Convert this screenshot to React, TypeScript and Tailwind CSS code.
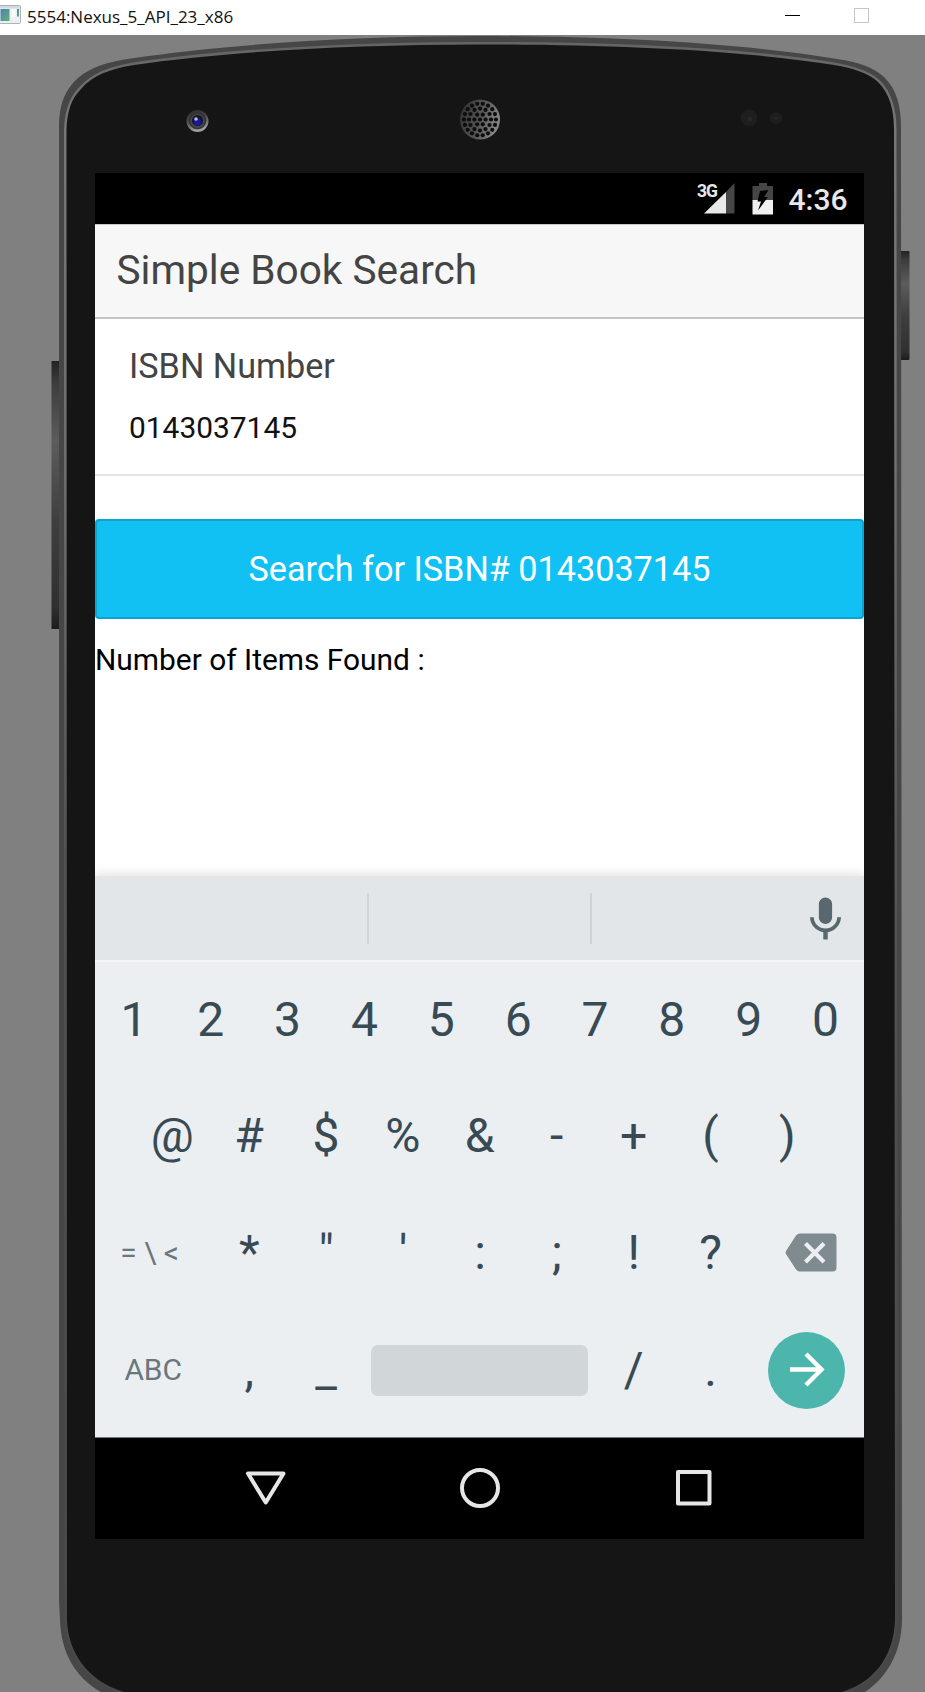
import React from 'react';

const BODY =
  'M59 1600 L59 128 C59 104 65 90 78 78 C92 66 109 62 131 58.500 C220 45 350 36 480 36 C610 36 740 43 837 59 C859 62 873 67 884 77 C897 90 901 106 901 128 L902 1620 C901.500 1650 889 1676 865 1692 L101 1692 C73 1676 61 1650 60 1620 Z';
const FACE =
  'M67 1600 L66.500 130 C67 112 71 99 81 89 C93 75 110 69 134 65 C220 52 350 44.500 480 44.500 C610 44.500 740 50 834 65 C854 68.500 868 73 878 82 C890 94 894 110 894 130 L895 1620 C894 1650 880 1680 842 1692 L124 1692 C85 1680 68 1650 67 1620 Z';

function speakerHoles() {
  const holes: { x: number; y: number }[] = [];
  [0, 5.6, 11, 16].forEach((radius, ring) => {
    const count = ring === 0 ? 1 : ring * 6;
    for (let i = 0; i < count; i++) {
      const a = (i / count) * Math.PI * 2;
      holes.push({ x: 480 + radius * Math.cos(a), y: 119.5 + radius * Math.sin(a) });
    }
  });
  return holes;
}

function DeviceArt() {
  return (
    <svg className="absolute left-0 top-0" width="925" height="1657" viewBox="0 35 925 1657" aria-hidden="true">
      <defs>
        <linearGradient id="key" x1="0" y1="0" x2="0" y2="1">
          <stop offset="0" stopColor="#222" />
          <stop offset="0.08" stopColor="#3c3c3c" />
          <stop offset="0.3" stopColor="#5c5c5c" />
          <stop offset="0.6" stopColor="#3e3e3e" />
          <stop offset="0.92" stopColor="#303030" />
          <stop offset="1" stopColor="#1c1c1c" />
        </linearGradient>
        <linearGradient id="edge" x1="0" y1="0" x2="0" y2="1">
          <stop offset="0" stopColor="#646465" />
          <stop offset="0.05" stopColor="#77777a" />
          <stop offset="0.25" stopColor="#707073" />
          <stop offset="0.5" stopColor="#545456" />
          <stop offset="1" stopColor="#48484a" />
        </linearGradient>
        <linearGradient id="camera" x1="0" y1="0" x2="0.3" y2="1">
          <stop offset="0" stopColor="#262626" />
          <stop offset="0.5" stopColor="#4c4c4c" />
          <stop offset="1" stopColor="#a0a0a0" />
        </linearGradient>
        <linearGradient id="mesh" x1="0" y1="0" x2="1" y2="0.3">
          <stop offset="0" stopColor="#2c2c2c" />
          <stop offset="0.6" stopColor="#565656" />
          <stop offset="1" stopColor="#858585" />
        </linearGradient>
      </defs>
      <rect x="51.500" y="361" width="9" height="268" fill="url(#key)" />
      <rect x="900" y="251" width="9.500" height="109" rx="1" fill="url(#key)" />
      <path d={BODY} fill="#464647" />
      <path d={FACE} fill="none" stroke="url(#edge)" strokeWidth="5" />
      <path d={FACE} fill="#151515" />

      <circle cx="197.500" cy="121" r="11" fill="url(#camera)" />
      <circle cx="197.500" cy="120.500" r="8.800" fill="#333" />
      <circle cx="197.500" cy="121" r="7" fill="#484848" />
      <circle cx="197.500" cy="120.500" r="5.500" fill="#15152e" />
      <circle cx="197.500" cy="122" r="3.600" fill="#1a1a9c" />
      <circle cx="196" cy="119" r="1.800" fill="#b9b9dc" />

      <circle cx="480" cy="119.500" r="20" fill="url(#mesh)" />
      {speakerHoles().map((h, i) => (
        <circle key={i} cx={h.x} cy={h.y} r="2.100" fill="#0d0d0d" />
      ))}

      <circle cx="749" cy="118" r="8.500" fill="#1f1e1e" />
      <circle cx="750" cy="119" r="2.200" fill="#33241f" />
      <circle cx="776" cy="118" r="6" fill="#1f1d1d" />
      <circle cx="776" cy="118.500" r="2" fill="#2e2020" />
    </svg>
  );
}

function TitleBar() {
  return (
    <header className="flex h-[35px] items-start bg-white">
      <svg className="mt-[5px]" width="21" height="20" viewBox="0 0 21 20" aria-hidden="true">
        <defs>
          <linearGradient id="win" x1="0" y1="0" x2="1" y2="1">
            <stop offset="0" stopColor="#4a87ae" />
            <stop offset="1" stopColor="#5fae7c" />
          </linearGradient>
        </defs>
        <rect x="-1" y="0.500" width="21.500" height="18" rx="1" fill="#eceeef" stroke="#aab3bd" />
        <rect x="0" y="1" width="20" height="2.500" fill="#d3dae4" />
        <rect x="0.500" y="4" width="9" height="12" fill="url(#win)" />
        <rect x="11.500" y="4" width="4" height="8" fill="#fafafa" />
        <rect x="17" y="4" width="2" height="7.500" fill="url(#win)" />
      </svg>
      <span className="ml-[6px] mt-[5px] flex-1 font-['Open_Sans',sans-serif] text-[17px] leading-[23px] text-[#111]">
        5554:Nexus_5_API_23_x86
      </span>
      <span className="mr-[54px] mt-[15px] h-px w-[15px] bg-black" />
      <span className="mr-[56px] mt-[8px] h-[15px] w-[15px] border border-[#c6c6c6]" />
    </header>
  );
}

function StatusBar() {
  return (
    <div className="flex h-[51px] items-start justify-end bg-black text-[#e8e8e8]">
      <span className="mt-[8px] font-[Roboto,sans-serif] text-[17.5px] font-bold leading-[20px] tracking-[-1px]">3G</span>
      <svg className="-ml-[13px] mt-[10px]" width="31" height="31" viewBox="0 0 31 31" aria-hidden="true">
        <path d="M30.500 0 V30.500 H22 V9 Z" fill="#464646" />
        <path d="M0 30.500 L22 9 V30.500 Z" fill="#e8e8e8" />
      </svg>
      <svg className="ml-[17px] mt-[10px]" width="22" height="32" viewBox="0 0 22 32" aria-hidden="true">
        <path d="M7 0 H15 V3 H21 V17 H0.500 V3 H7 Z" fill="#464646" />
        <path d="M0.500 17 H21 V31.500 H0.500 Z" fill="#f0f0f0" />
        <path d="M8 8 L16.500 7 L12 14 H16 L6 27.500 L9 18.500 H5.500 Z" fill="#000" />
      </svg>
      <span className="ml-[14.5px] mr-[16.5px] mt-[9px] font-[Roboto,sans-serif] text-[30px] font-medium leading-[36px]">4:36</span>
    </div>
  );
}

function Key({ label }: { label: string }) {
  return <button className="flex h-full w-[76.9px] items-center justify-center">{label}</button>;
}

function Keyboard() {
  return (
    <div className="h-[561px] bg-[#ebeff2] font-[Roboto,sans-serif] text-[48px] text-[#384a53] shadow-[0_-2px_10px_rgba(0,0,0,0.13)]">
      <div className="flex h-[86px] items-start border-b-2 border-[#f4f6f8] bg-[#e2e6e9]">
        <div className="mt-[17px] h-[51px] w-[274px] border-r-2 border-[#d0d4d7]" />
        <div className="mt-[17px] h-[51px] w-[222.500px] border-r-2 border-[#d0d4d7]" />
        <svg className="ml-auto mr-[12.5px] mt-[16.5px]" width="53" height="53" viewBox="0 0 24 24" fill="#59676e" aria-hidden="true">
          <path d="M12 14c1.660 0 2.990-1.340 2.990-3L15 5c0-1.660-1.340-3-3-3S9 3.340 9 5v6c0 1.660 1.340 3 3 3zm5.300-3c0 3-2.540 5.100-5.300 5.100S6.700 14 6.700 11H5c0 3.410 2.720 6.230 6 6.720V21h2v-3.280c3.280-.480 6-3.300 6-6.720h-1.700z" />
        </svg>
      </div>
      <div className="flex h-[115px] pl-[0.5px]">
        {['1', '2', '3', '4', '5', '6', '7', '8', '9', '0'].map((k) => (
          <Key key={k} label={k} />
        ))}
      </div>
      <div className="flex h-[118px] justify-center pl-[0.5px]">
        {['@', '#', '$', '%', '&', '-', '+', '(', ')'].map((k) => (
          <Key key={k} label={k} />
        ))}
      </div>
      <div className="flex h-[116px] pl-[0.5px]">
        <button className="flex h-full w-[115.35px] items-center justify-center whitespace-pre pr-[7px] text-[29.9px] text-[#6a777d]">
          {'= \\ <'}
        </button>
        {['*', '"', "'", ':', ';', '!', '?'].map((k) => (
          <Key key={k} label={k} />
        ))}
        <div className="flex flex-1 items-center justify-center pb-[1px] pl-[8px]">
          <svg width="52" height="39" viewBox="0 0 52 39" aria-hidden="true">
            <path d="M15 0.500 H47.500 Q51.500 0.500 51.500 4.500 V34.500 Q51.500 38.500 47.500 38.500 H15 Q12.500 38.500 11 36.500 L1 21 Q0 19.500 1 18 L11 2.500 Q12.500 0.500 15 0.500 Z" fill="#808b90" />
            <path d="M20.500 10.500 L39 29 M39 10.500 L20.500 29" stroke="#ebeff2" strokeWidth="4.200" />
          </svg>
        </div>
      </div>
      <div className="flex h-[118px] pl-[0.5px]">
        <button className="flex h-full w-[115.35px] items-center justify-center text-[29.9px] text-[#6a777d]">ABC</button>
        <Key label="," />
        <Key label="_" />
        <div className="flex w-[230.700px] items-center justify-center">
          <div className="h-[51px] w-[217px] rounded-[7px] bg-[#d1d6d9]" />
        </div>
        <Key label="/" />
        <Key label="." />
        <div className="flex flex-1 items-center justify-center">
          <div className="flex h-[77px] w-[77px] items-center justify-center rounded-full bg-[#4db6ac]">
            <svg width="36" height="36" viewBox="0 0 36 36" fill="none" stroke="#fff" strokeWidth="4.400" aria-hidden="true">
              <path d="M1 17.500 H32.500 M17 2 L32.500 17.500 L17 33" />
            </svg>
          </div>
        </div>
      </div>
    </div>
  );
}

function NavBar() {
  return (
    <div className="flex h-[102px] items-center justify-center gap-[172px] border-t border-[#777] bg-black pb-[1.5px]">
      <svg width="42" height="42" viewBox="0 0 42 42" fill="none" stroke="#e6e6e6" strokeWidth="4" strokeLinejoin="round" aria-hidden="true">
        <path d="M3 6.500 H38.500 L20.750 35.500 Z" />
      </svg>
      <svg width="42" height="42" viewBox="0 0 42 42" fill="none" stroke="#e6e6e6" strokeWidth="4" aria-hidden="true">
        <circle cx="21" cy="21" r="18" />
      </svg>
      <svg width="42" height="42" viewBox="0 0 42 42" fill="none" stroke="#e6e6e6" strokeWidth="4" strokeLinejoin="round" aria-hidden="true">
        <rect x="5" y="5" width="31.500" height="31.500" />
      </svg>
    </div>
  );
}

export default function App() {
  return (
    <div className="h-[1692px] w-[925px] overflow-hidden bg-[#808080]">
      <TitleBar />
      <main className="relative h-[1657px]">
        <DeviceArt />
        <div className="relative pl-[95px] pt-[138px]">
          <div className="h-[1366px] w-[769px] overflow-hidden bg-white">
            <StatusBar />
            <div className="flex h-[95px] items-center border-b-2 border-t border-b-[#c4c4c4] border-t-[#c8c8c8] bg-[#f7f7f7] pb-[2px] pl-[21.5px] font-[Roboto,sans-serif]">
              <h1 className="text-[40.6px] font-normal leading-[50px] text-[#444]">Simple Book Search</h1>
            </div>
            <div className="h-[157px] border-b-2 border-[#e3e3e3] pl-[34px] pt-[27px] font-[Roboto,sans-serif]">
              <div className="text-[34.2px] leading-[40px] text-[#444]">ISBN Number</div>
              <div className="mt-[24px] text-[29.9px] leading-[36px] text-[#111]">0143037145</div>
            </div>
            <button className="mt-[43px] flex h-[100px] w-full items-center justify-center rounded-[4px] border-2 border-[#0fa3d2] bg-[#11c1f3] pt-[2px] font-[Roboto,sans-serif] text-[34.2px] text-white">
              Search for ISBN# 0143037145
            </button>
            <div className="flex h-[257px] items-start pt-[23px] font-[Roboto,sans-serif] text-[29.9px] leading-[36px] text-black">
              Number of Items Found :
            </div>
            <Keyboard />
            <NavBar />
          </div>
        </div>
      </main>
    </div>
  );
}
